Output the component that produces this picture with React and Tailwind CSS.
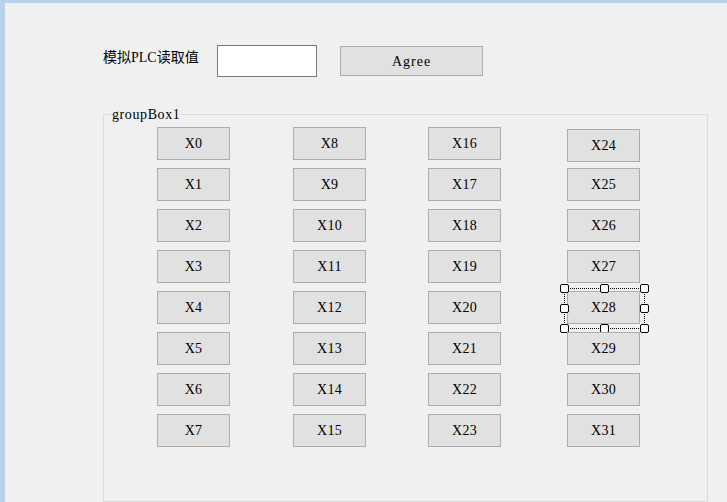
import React from "react";

function Btn({ label, extra = "", children }) {
  return (
    <div
      className={`relative w-[73px] h-[33px] bg-[#e1e1e1] border border-[#adadad] flex items-center justify-center text-[14px] text-black ${extra}`}
    >
      <span className="font-['Liberation_Serif',serif] tracking-[0.3px] leading-[16px] mt-[1px]">{label}</span>
      {children}
    </div>
  );
}

function Handle({ cls }) {
  return (
    <div className={`absolute w-[9px] h-[9px] bg-white border border-black rounded-[2px] ${cls}`} />
  );
}

function Selection() {
  return (
    <div className="absolute left-[-4px] top-[-4px] w-[81px] h-[41px] border border-dotted border-black pointer-events-none">
      <Handle cls="left-[-5px] top-[-5px]" />
      <Handle cls="left-[35px] top-[-5px]" />
      <Handle cls="left-[75px] top-[-5px]" />
      <Handle cls="left-[-5px] top-[15px]" />
      <Handle cls="left-[75px] top-[15px]" />
      <Handle cls="left-[-5px] top-[35px]" />
      <Handle cls="left-[35px] top-[35px]" />
      <Handle cls="left-[75px] top-[35px]" />
    </div>
  );
}

function Column({ start, ml, last }) {
  const items = Array.from({ length: 8 }, (_, i) => start + i);
  return (
    <div className={`flex flex-col gap-[8px] ${ml}`}>
      {items.map((n, i) => {
        let extra = "";
        if (last && i === 0) extra = "mt-[2px] -mb-[2px]";
        return (
          <Btn key={n} label={`X${n}`} extra={extra}>
            {last && n === 28 ? <Selection /> : null}
          </Btn>
        );
      })}
    </div>
  );
}

export default function App() {
  return (
    <div className="w-[727px] h-[502px] overflow-hidden bg-[#b9d1ea] pt-[3px] pl-[5px] flex">
      <div className="flex-1 bg-[#f0f0f0] flex flex-col">
        <div className="flex items-center pl-[98px] pt-[42px]">
          <div className="w-[114px] text-[14px] text-black leading-[20px] pb-[7px] whitespace-nowrap font-['Liberation_Serif','Noto_Sans_CJK_SC',serif]">
            模拟PLC读取值
          </div>
          <div className="w-[100px] h-[32px] bg-white border border-[#7a7a7a]" />
          <div className="ml-[23px] w-[143px] h-[30px] bg-[#e1e1e1] border border-[#adadad] flex items-center justify-center text-[14px] text-black">
            <span className="font-['Liberation_Serif',serif] tracking-[1px] leading-[16px] mt-[1px]">Agree</span>
          </div>
        </div>
        <div className="relative ml-[98px] mt-[37px] w-[605px] h-[420px] border border-[#dcdcdc]">
          <span className="absolute left-[7px] top-[-9px] px-[1px] bg-[#f0f0f0] text-[14px] leading-[18px] tracking-[0.6px] text-black font-['Liberation_Serif',serif]">
            groupBox1
          </span>
          <div className="flex pt-[12px]">
            <Column start={0} ml="ml-[53px]" />
            <Column start={8} ml="ml-[63px]" />
            <Column start={16} ml="ml-[62px]" />
            <Column start={24} ml="ml-[66px]" last />
          </div>
        </div>
      </div>
    </div>
  );
}
